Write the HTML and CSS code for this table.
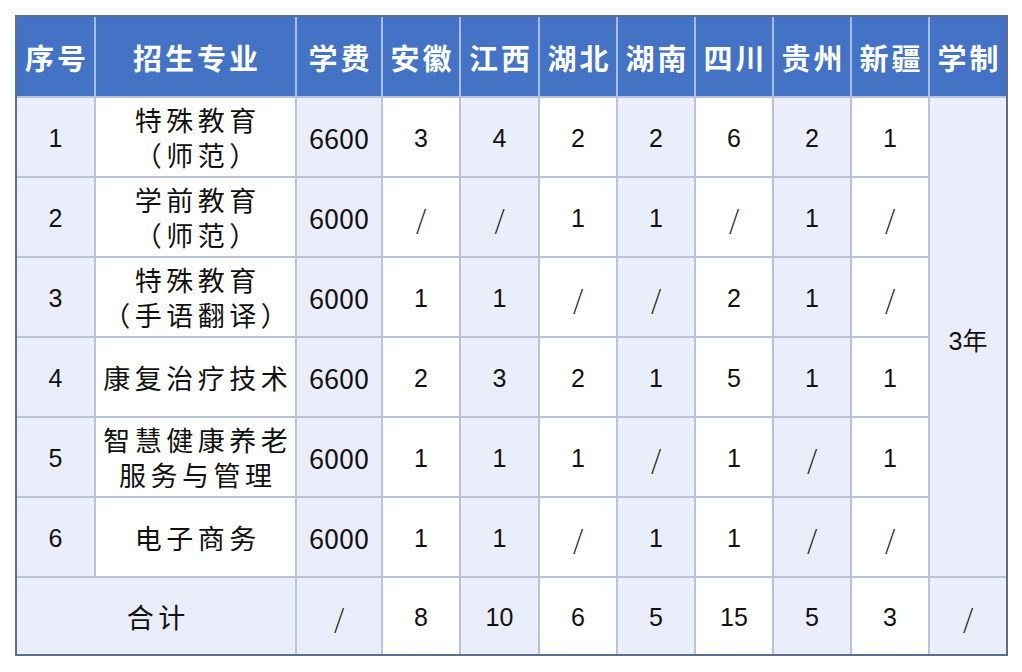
FILE: index.html
```html
<!DOCTYPE html>
<html lang="zh-CN">
<head>
<meta charset="utf-8">
<title>招生计划</title>
<link rel="stylesheet" href="styles.css">
</head>
<body>
<div class="frame">
<table class="plan">
  <colgroup>
    <col class="c-idx tint">
    <col class="c-major">
    <col class="c-fee tint">
    <col class="c-prov">
    <col class="c-prov2 tint">
    <col class="c-prov">
    <col class="c-prov tint">
    <col class="c-prov">
    <col class="c-prov tint">
    <col class="c-prov">
    <col class="c-last tint">
  </colgroup>
  <thead>
    <tr class="head">
      <th>序号</th><th>招生专业</th><th>学费</th><th>安徽</th><th>江西</th><th>湖北</th><th>湖南</th><th>四川</th><th>贵州</th><th>新疆</th><th>学制</th>
    </tr>
  </thead>
  <tbody>
    <tr>
      <td class="num">1</td><td class="txt">特殊教育<br>（师范）</td><td class="fee">6600</td>
      <td class="num">3</td><td class="num">4</td><td class="num">2</td><td class="num">2</td><td class="num">6</td><td class="num">2</td><td class="num">1</td>
      <td class="num" rowspan="6">3年</td>
    </tr>
    <tr>
      <td class="num">2</td><td class="txt">学前教育<br>（师范）</td><td class="fee">6000</td>
      <td class="sl">/</td><td class="sl">/</td><td class="num">1</td><td class="num">1</td><td class="sl">/</td><td class="num">1</td><td class="sl">/</td>
    </tr>
    <tr>
      <td class="num">3</td><td class="txt">特殊教育<br>（手语翻译）</td><td class="fee">6000</td>
      <td class="num">1</td><td class="num">1</td><td class="sl">/</td><td class="sl">/</td><td class="num">2</td><td class="num">1</td><td class="sl">/</td>
    </tr>
    <tr>
      <td class="num">4</td><td class="txt">康复治疗技术</td><td class="fee">6600</td>
      <td class="num">2</td><td class="num">3</td><td class="num">2</td><td class="num">1</td><td class="num">5</td><td class="num">1</td><td class="num">1</td>
    </tr>
    <tr>
      <td class="num">5</td><td class="txt">智慧健康养老<br>服务与管理</td><td class="fee">6000</td>
      <td class="num">1</td><td class="num">1</td><td class="num">1</td><td class="sl">/</td><td class="num">1</td><td class="sl">/</td><td class="num">1</td>
    </tr>
    <tr>
      <td class="num">6</td><td class="txt">电子商务</td><td class="fee">6000</td>
      <td class="num">1</td><td class="num">1</td><td class="sl">/</td><td class="num">1</td><td class="num">1</td><td class="sl">/</td><td class="sl">/</td>
    </tr>
    <tr class="total">
      <td class="txt sum" colspan="2">合计</td><td class="sl">/</td>
      <td class="num">8</td><td class="num">10</td><td class="num">6</td><td class="num">5</td><td class="num">15</td><td class="num">5</td><td class="num">3</td><td class="sl">/</td>
    </tr>
  </tbody>
</table>
</div>
</body>
</html>
```
FILE: styles.css
```css
html, body {
  margin: 0;
  padding: 0;
  background: #ffffff;
}

body {
  font-family: "Noto Sans CJK SC", "Noto Sans", sans-serif;
  color: #111111;
}

.frame {
  display: inline-block;
  margin: 15px 0 0 15px;
  border: 2px solid #5a6f8f;
  line-height: 0;
}

.plan {
  width: 988px;
  table-layout: fixed;
  border-collapse: collapse;
  border-style: hidden;
  line-height: normal;
}

.c-idx { width: 78px; }
.c-major { width: 201px; }
.c-fee { width: 86px; }
.c-prov { width: 78px; }
.c-prov2 { width: 79px; }
.c-last { width: 77px; }

col.tint { background: #e9eefa; }

.head th {
  height: 79px;
  padding: 0 0 0 3px;
  background: #4472c4;
  color: #ffffff;
  font-size: 29px;
  font-weight: 700;
  letter-spacing: 3px;
  text-align: center;
  vertical-align: middle;
  border: 2px solid #a8bde4;
  border-bottom-color: #b8c3d9;
}

.plan td {
  height: 78px;
  padding: 0;
  text-align: center;
  vertical-align: middle;
  border: 2px solid #b8c3d9;
}

.plan .total td {
  height: 76px;
}

.txt {
  font-size: 27px;
  line-height: 35px;
  letter-spacing: 4.5px;
  padding-left: 4.5px !important;
}

.sum {
  background: #e9eefa;
}

.fee {
  font-size: 27px;
}

.plan td.num {
  font-family: "Liberation Sans", "Noto Sans CJK SC", sans-serif;
  font-size: 25px;
  height: 75px;
  padding-top: 3px;
}

.plan .total td.num {
  height: 73px;
}

.sl {
  font-size: 26px;
  font-weight: 300;
}
```
